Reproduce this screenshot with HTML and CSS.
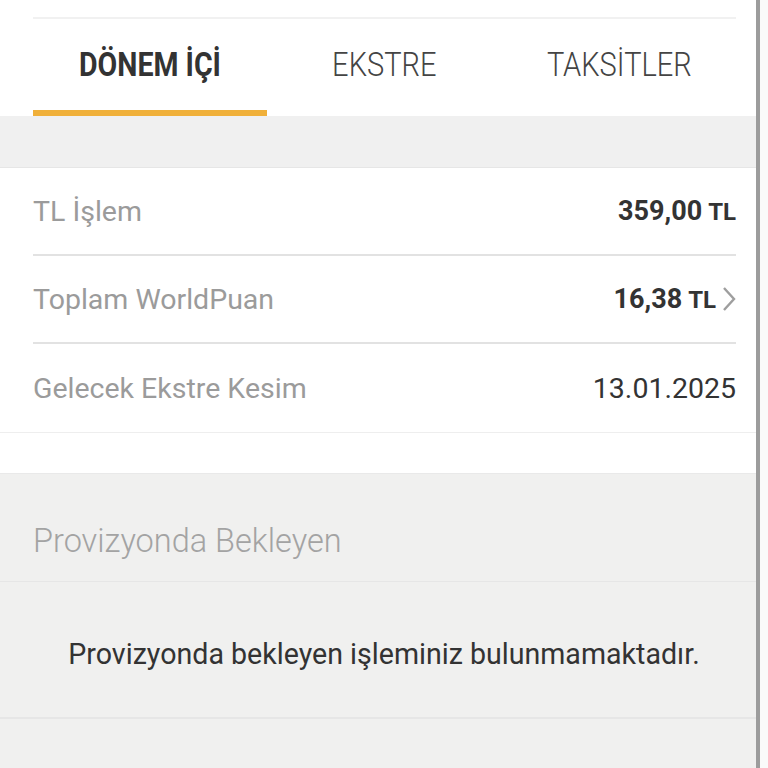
FILE: index.html
```html
<!DOCTYPE html>
<html lang="tr">
<head>
<meta charset="utf-8">
<link rel="stylesheet" href="styles.css">
</head>
<body>
<div class="screen">
  <div class="content">
    <div class="top">
      <div class="top-line"></div>
      <nav class="tabs">
        <div class="tab active"><span>DÖNEM İÇİ</span></div>
        <div class="tab"><span>EKSTRE</span></div>
        <div class="tab"><span>TAKSİTLER</span></div>
      </nav>
    </div>
    <div class="band"></div>
    <section class="summary">
      <div class="row">
        <span class="label">TL İşlem</span>
        <span class="value strong">359,00 <small>TL</small></span>
      </div>
      <div class="row">
        <span class="label">Toplam WorldPuan</span>
        <span class="value strong">16,38 <small>TL</small>
          <svg class="chev" viewBox="0 0 16 26" width="16" height="26"><path d="M3 2 L13 13 L3 24" fill="none" stroke="#9e9e9e" stroke-width="2.4"/></svg>
        </span>
      </div>
      <div class="row last">
        <span class="label">Gelecek Ekstre Kesim</span>
        <span class="value">13.01.2025</span>
      </div>
    </section>
    <div class="spacer"></div>
    <section class="pending">
      <div class="pending-head">Provizyonda Bekleyen</div>
      <div class="pending-msg">Provizyonda bekleyen işleminiz bulunmamaktadır.</div>
      <div class="pending-rest"></div>
    </section>
  </div>
  <div class="scrollbar"></div>
</div>
</body>
</html>
```

FILE: styles.css
```css
html, body {
  margin: 0;
  padding: 0;
  height: 768px;
  overflow: hidden;
  background: #fafafa;
  font-family: Roboto, "Liberation Sans", sans-serif;
}
.screen {
  display: flex;
  height: 768px;
}
.content {
  width: 756px;
  display: flex;
  flex-direction: column;
  background: #f0f0ef;
}
.scrollbar {
  width: 4px;
  background: #9c9c9c;
  margin-right: 8px;
}
.top {
  background: #fff;
  padding: 17px 20px 0 33px;
}
.top-line {
  height: 2px;
  background: #f1f1f1;
}
.tabs {
  display: grid;
  grid-template-columns: repeat(3, 1fr);
  height: 97px;
}
.tab {
  display: flex;
  align-items: center;
  justify-content: center;
  padding-top: 0;
  color: #444;
  font-size: 33px;
  font-weight: 300;
  border-bottom: 6px solid transparent;
}
.tab span {
  display: inline-block;
  transform: scaleX(0.88);
}
.tab.active {
  border-bottom-color: #f0b03a;
  color: #333;
  font-weight: 700;
}
.tab.active span {
  transform: scaleX(0.865);
}
.band {
  height: 51px;
  background: #f0f0f0;
  border-bottom: 1px solid #e6e6e6;
}
.summary {
  background: #fff;
  padding: 0 20px 0 33px;
  border-bottom: 1px solid #eeeeee;
}
.row {
  height: 86px;
  display: flex;
  align-items: center;
  justify-content: space-between;
  border-bottom: 2px solid #e2e2e2;
}
.row.last {
  border-bottom: none;
  height: 88px;
}
.label {
  color: #9b9b9b;
  font-size: 28.5px;
}
.value {
  color: #333;
  font-size: 28.5px;
  display: flex;
  align-items: center;
}
.value.strong {
  font-weight: 700;
  font-size: 27px;
}
.value small {
  font-size: 24px;
  margin-left: 6px;
  padding-top: 2px;
}
.chev {
  margin-left: 5px;
  margin-right: -1px;
}
.spacer {
  height: 40px;
  background: #fff;
  border-bottom: 1px solid #e9e9e9;
}
.pending {
  flex: 1;
  background: #f0f0ef;
}
.pending-head {
  height: 108px;
  box-sizing: border-box;
  padding: 26px 33px 0;
  display: flex;
  align-items: center;
  color: #a3a3a3;
  font-size: 32.5px;
  font-weight: 300;
  border-bottom: 1px solid #e6e6e6;
}
.pending-msg {
  height: 137px;
  box-sizing: border-box;
  padding: 8px 0 0 12px;
  display: flex;
  align-items: center;
  justify-content: center;
  color: #333;
  font-size: 28.6px;
  border-bottom: 2px solid #e6e6e6;
}
```
